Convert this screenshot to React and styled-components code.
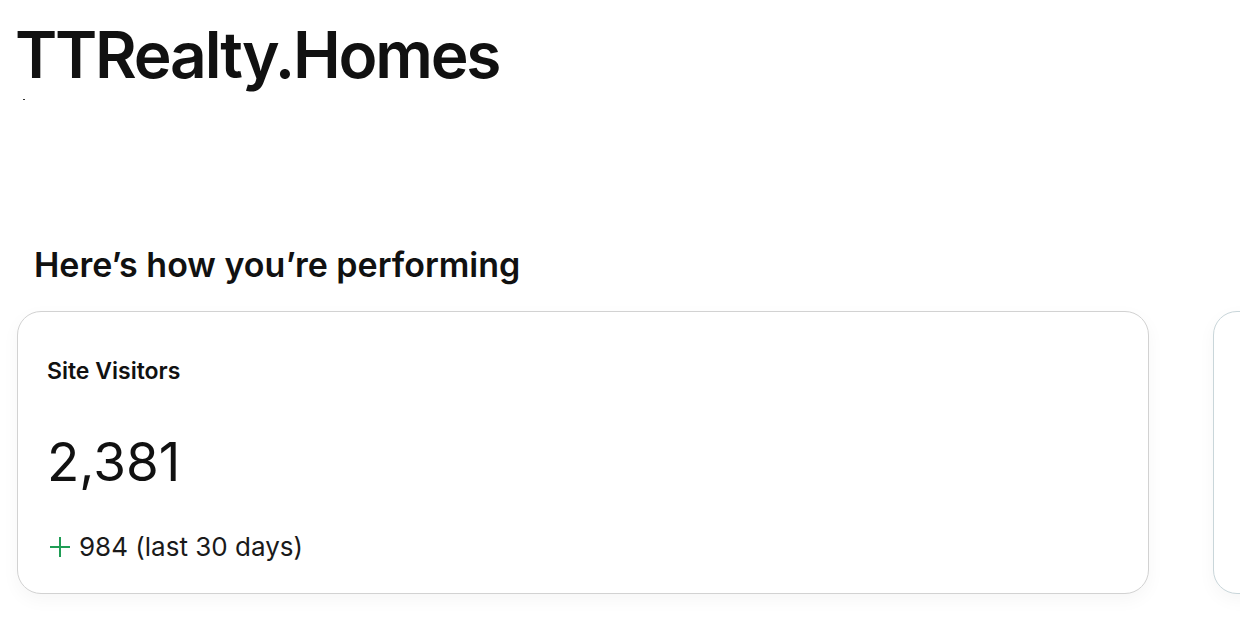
import React from "react";
import styled, { createGlobalStyle } from "styled-components";

const Global = createGlobalStyle`
  html, body { margin: 0; padding: 0; background: #ffffff; }
  body { font-family: Inter, "Noto Sans", sans-serif; color: #111111; overflow: hidden; width: 1240px; height: 620px; }
`;

const Page = styled.div`
  display: flex;
  flex-direction: column;
  width: 1240px;
  height: 620px;
  overflow: hidden;
`;

const Header = styled.header`
  display: flex;
  flex-direction: column;
  padding: 16px 0 0 15px;
  height: 200px;
  box-sizing: border-box;
`;

const Brand = styled.h1`
  margin: 0;
  font-family: Inter, sans-serif;
  font-weight: 600;
  font-size: 64px;
  line-height: 78px;
  letter-spacing: -2.2px;
  color: #111111;
`;

const Tick = styled.span`
  display: block;
  width: 2px;
  height: 1px;
  margin: 5px 0 0 8px;
  background: #333;
`;

const Section = styled.section`
  display: flex;
  flex-direction: column;
  padding-left: 17px;
`;

const SectionTitle = styled.h2`
  margin: 45px 0 0 17px;
  font-family: Inter, sans-serif;
  font-weight: 600;
  font-size: 34px;
  line-height: 40px;
  letter-spacing: 0;
  color: #111111;
`;

const CardRow = styled.div`
  display: flex;
  gap: 64px;
  margin-top: 26px;
`;

const Card = styled.div`
  flex: 0 0 ${(p) => p.$width}px;
  height: 283px;
  box-sizing: border-box;
  border: 1px solid ${(p) => p.$border || "#d2d2d2"};
  border-radius: 24px;
  box-shadow: 0 6px 18px rgba(0, 0, 0, 0.04);
  padding: 46px 30px 0 29px;
  display: flex;
  flex-direction: column;
  background: #fff;
`;

const CardLabel = styled.div`
  font-weight: 600;
  font-size: 23px;
  line-height: 26px;
  color: #111;
`;

const BigNumber = styled.div`
  margin-top: 50px;
  font-weight: 400;
  font-size: 53px;
  line-height: 56px;
  color: #111;
`;

const Delta = styled.div`
  margin-top: 42px;
  display: flex;
  align-items: center;
  gap: 8px;
  font-size: 26px;
  line-height: 30px;
  color: #1a1a1a;
`;

const Plus = styled.svg`
  width: 22px;
  height: 22px;
  margin-left: 2px;
`;

export default function App() {
  return (
    <Page>
      <Global />
      <Header>
        <Brand>TTRealty.Homes</Brand>
        <Tick />
      </Header>
      <Section>
        <SectionTitle>Here’s how you’re performing</SectionTitle>
        <CardRow>
          <Card $width={1132}>
            <CardLabel>Site Visitors</CardLabel>
            <BigNumber>2,381</BigNumber>
            <Delta>
              <Plus viewBox="0 0 22 22">
                <path d="M11 1v20M1 11h20" stroke="#1f9d55" strokeWidth="2" fill="none" />
              </Plus>
              <span>984 (last 30 days)</span>
            </Delta>
          </Card>
          <Card $width={400} $border="#c9d6da" />
        </CardRow>
      </Section>
    </Page>
  );
}
